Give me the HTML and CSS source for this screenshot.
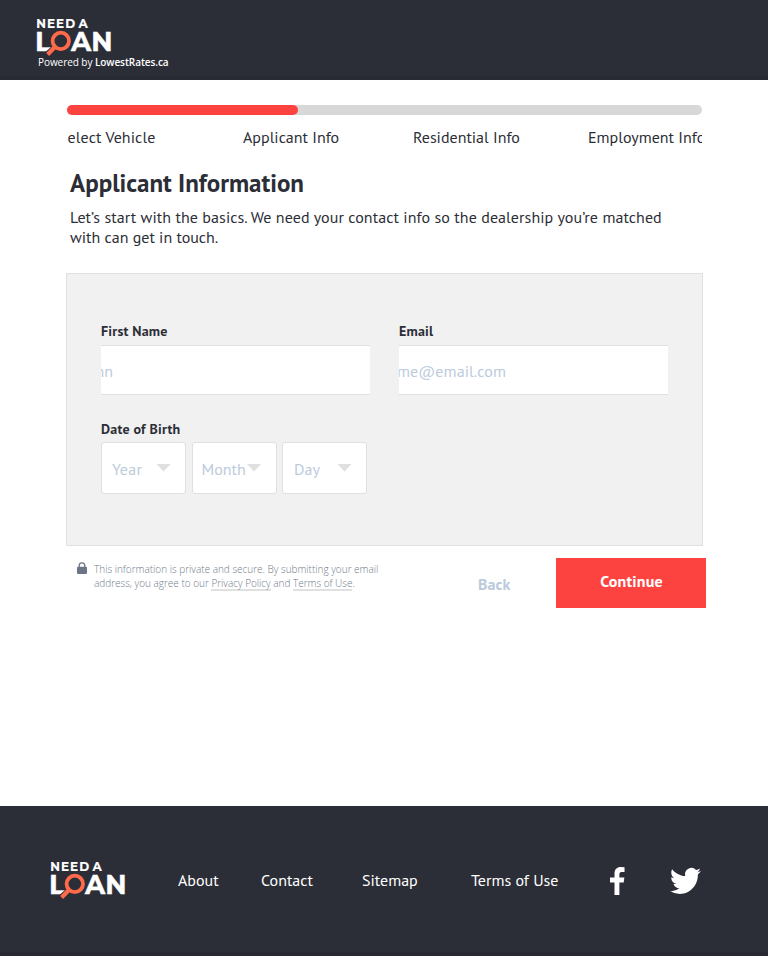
FILE: index.html
```html
<!DOCTYPE html>
<html lang="en">
<head>
<meta charset="utf-8">
<title>Need a Loan – Applicant Information</title>
<link rel="stylesheet" href="styles.css">
</head>
<body>
<header class="header">
  <svg class="logo" viewBox="0 0 76 40">
    <text class="need" x="-0.7" y="9.6" font-size="12" textLength="38.8" lengthAdjust="spacing">NEED</text>
    <text class="need" x="41.6" y="9.6" font-size="12">A</text>
    <text class="loan" x="-1.9" y="32.6" font-size="27">L</text>
    <text class="loan" x="34" y="32.6" font-size="27" textLength="41.5" lengthAdjust="spacingAndGlyphs">AN</text>
    <path d="M19 29 L10.5 36.5" stroke="#2c2e37" stroke-width="6.5"/>
    <circle cx="23.8" cy="22.9" r="8.2" fill="#2c2e37" stroke="#ff6a4a" stroke-width="3.8"/>
    <path d="M18.4 28.6 L10.6 36.4" stroke="#ff6a4a" stroke-width="4.2"/>
  </svg>
  <p class="powered"><span>Powered by</span> <b>LowestRates.ca</b></p>
</header>
<main class="main">
  <div class="progress"><div class="progress-bar"></div></div>
  <nav class="steps">
    <span class="step step-vehicle">Select Vehicle</span>
    <span class="step step-applicant">Applicant Info</span>
    <span class="step step-residential">Residential Info</span>
    <span class="step step-employment">Employment Info</span>
  </nav>
  <h1 class="title">Applicant Information</h1>
  <p class="intro"><span class="intro-first">Let’s start with the basics. We need your contact info so the dealership you’re matched</span><br><span>with can get in touch.</span></p>
  <form class="card">
    <div class="field">
      <label class="label">First Name</label>
      <div class="input"><span class="hint-name">John</span></div>
    </div>
    <div class="field">
      <label class="label">Email</label>
      <div class="input"><span class="hint-email">name@email.com</span></div>
    </div>
    <div class="field">
      <label class="label">Date of Birth</label>
      <div class="selects">
        <div class="select year"><span>Year</span><i class="caret"></i></div>
        <div class="select month"><span>Month</span><i class="caret"></i></div>
        <div class="select day"><span>Day</span><i class="caret"></i></div>
      </div>
    </div>
  </form>
  <div class="actions">
    <svg class="lock" viewBox="0 0 10 12"><path d="M2.2 6V3.6a2.8 2.8 0 0 1 5.6 0V6" fill="none" stroke="#6b7786" stroke-width="1.3"/><rect y="4.8" width="10" height="7.2" rx="1" fill="#6b7786"/></svg>
    <p class="legal"><span>This information is private and secure. By submitting your email</span><br><span class="legal-last">address, you agree to our <a>Privacy Policy</a> and <a>Terms of Use</a>.</span></p>
    <span class="back">Back</span>
    <button class="continue" type="button">Continue</button>
  </div>
</main>
<footer class="footer">
  <svg class="logo" viewBox="0 0 76 40">
    <text class="need" x="-0.7" y="9.6" font-size="12" textLength="38.8" lengthAdjust="spacing">NEED</text>
    <text class="need" x="41.6" y="9.6" font-size="12">A</text>
    <text class="loan" x="-1.9" y="32.6" font-size="27">L</text>
    <text class="loan" x="34" y="32.6" font-size="27" textLength="41.5" lengthAdjust="spacingAndGlyphs">AN</text>
    <path d="M19 29 L10.5 36.5" stroke="#2c2e37" stroke-width="6.5"/>
    <circle cx="23.8" cy="22.9" r="8.2" fill="#2c2e37" stroke="#ff6a4a" stroke-width="3.8"/>
    <path d="M18.4 28.6 L10.6 36.4" stroke="#ff6a4a" stroke-width="4.2"/>
  </svg>
  <a class="link about">About</a>
  <a class="link contact">Contact</a>
  <a class="link sitemap">Sitemap</a>
  <a class="link terms">Terms of Use</a>
  <svg class="facebook" viewBox="0 0 16 28" preserveAspectRatio="none"><path d="M15.5 0.2V5H12.5C10.5 5 10 6 10 7.3V10.5H15.3L14.6 15.5H10V28H4.8V15.5H0V10.5H4.8V6.5C4.8 2.2 7.5 0 11.4 0Z" fill="#fff"/></svg>
  <svg class="twitter" viewBox="0 0 24 24" preserveAspectRatio="none"><path fill="#fff" d="M23.953 4.57a10 10 0 01-2.825.775 4.958 4.958 0 002.163-2.723 9.99 9.99 0 01-3.127 1.184 4.92 4.92 0 00-8.384 4.482C7.69 8.095 4.067 6.13 1.64 3.162a4.822 4.822 0 00-.666 2.475c0 1.71.87 3.213 2.188 4.096a4.904 4.904 0 01-2.228-.616v.06a4.923 4.923 0 003.946 4.827 4.996 4.996 0 01-2.212.085 4.936 4.936 0 004.604 3.417 9.867 9.867 0 01-6.102 2.105c-.39 0-.779-.023-1.17-.067a13.995 13.995 0 007.557 2.209c9.053 0 13.998-7.496 13.998-13.985 0-.21 0-.42-.015-.63A9.935 9.935 0 0024 4.59z"/></svg>
</footer>
</body>
</html>
```
FILE: styles.css
```css
* { box-sizing: border-box; }
body { margin: 0; background: #fff; color: #2c2e37; font: 16px/20px "PT Sans", "Noto Sans", sans-serif; }
p, h1 { margin: 0; }
span, label, a, h1 { white-space: nowrap; }
.logo { display: block; width: 76px; height: 40px; flex: none; fill: #fff; font-family: "Montserrat", "Open Sans", sans-serif; font-weight: 700; overflow: visible; }
.need { stroke: #fff; stroke-width: 0.15px; }
.loan { stroke: #fff; stroke-width: 0.4px; }

.header { height: 80px; padding: 18px 37px 0; background: #2c2e37; border-bottom: 4px solid #292933; }
.powered { margin: -3px 0 0 1px; color: #fff; font: 10px/14px "Open Sans", sans-serif; letter-spacing: -0.06px; white-space: nowrap; }
.powered b { font-weight: 600; }

.main { height: 726px; padding: 25px 62px 0 66px; }
.progress { width: 635px; height: 10px; margin-left: 1px; border-radius: 5px; background: #d8d8d8; }
.progress-bar { width: 231px; height: 10px; border-radius: 5px; background: #fd4340; }
.steps { display: flex; width: 635px; height: 24px; margin: 10px 0 0 1px; padding-top: 2px; overflow: hidden; }
.step { flex: none; }
.step-vehicle { width: 184px; margin-left: -8px; letter-spacing: 0.1px; }
.step-applicant { width: 170px; }
.step-residential { width: 175px; }
.title { margin: 18px 0 0 4px; font-size: 25px; line-height: 32px; font-weight: 700; }
.intro { margin: 8px 0 0 4px; }
.intro-first { letter-spacing: 0.075px; }

.card { display: grid; grid-template-columns: 269px 269px; column-gap: 29px; align-content: start; width: 637px; height: 273px; margin-top: 26px; padding: 48px 0 0 34px; background: #f1f1f1; border: 1px solid #e0e0e0; }
.field { height: 98px; }
.label { display: block; height: 23px; font-size: 14px; line-height: 18px; font-weight: 700; letter-spacing: 0.2px; }
.input { display: flex; align-items: center; height: 50px; padding-top: 1px; overflow: hidden; color: #bccbdc; background: #fff; border-top: 1px solid #e0e0e0; border-bottom: 1px solid #e0e0e0; letter-spacing: 0.1px; }
.hint-name { margin-left: -19px; }
.hint-email { margin-left: -19px; }
.selects { display: flex; gap: 5.5px; margin-top: -1px; }
.select { display: flex; align-items: center; justify-content: space-between; width: 85px; height: 52px; padding: 1px 14px 0 10px; color: #bccbdc; background: #fff; border: 1px solid #e0e0e0; border-radius: 3px; }
.year span { letter-spacing: 0.25px; }
.month { padding-left: 9px; }
.day { padding-left: 11px; }
.caret { flex: none; width: 15px; height: 8px; margin-top: -2px; background: #e0e0e0; clip-path: polygon(0 0, 100% 0, 50% 100%); }

.actions { display: flex; align-items: flex-start; padding: 12px 0 0 11px; }
.lock { width: 10px; height: 12px; margin-top: 4px; }
.legal { width: 384px; margin: 4px 0 0 7px; color: #717c8a; font: 300 10px/14px "Open Sans", sans-serif; }
.legal-last { letter-spacing: -0.01px; }
.legal a { display: inline-block; border-bottom: 2px solid #e0e0e0; line-height: 12px; }
.back { width: 78px; margin-top: 16px; color: #bccbdc; font-weight: 700; letter-spacing: 0.1px; }
.continue { width: 150px; height: 50px; padding: 0 0 4px 1px; color: #fff; background: #fd4340; border: 0; font: 700 16px/20px "PT Sans", "Noto Sans", sans-serif; letter-spacing: 0.2px; }

.footer { display: flex; align-items: flex-start; height: 150px; padding: 55px 0 0 51px; background: #2c2e37; border-bottom: 4px solid #292933; color: #fff; }
.link { margin-top: 9px; }
.about { width: 83px; margin-left: 51px; }
.contact { width: 101px; }
.sitemap { width: 109px; }
.terms { width: 139px; }
.facebook { width: 15px; height: 28px; margin-top: 6px; }
.twitter { width: 31px; height: 32px; margin: 4px 0 0 45px; }
```
